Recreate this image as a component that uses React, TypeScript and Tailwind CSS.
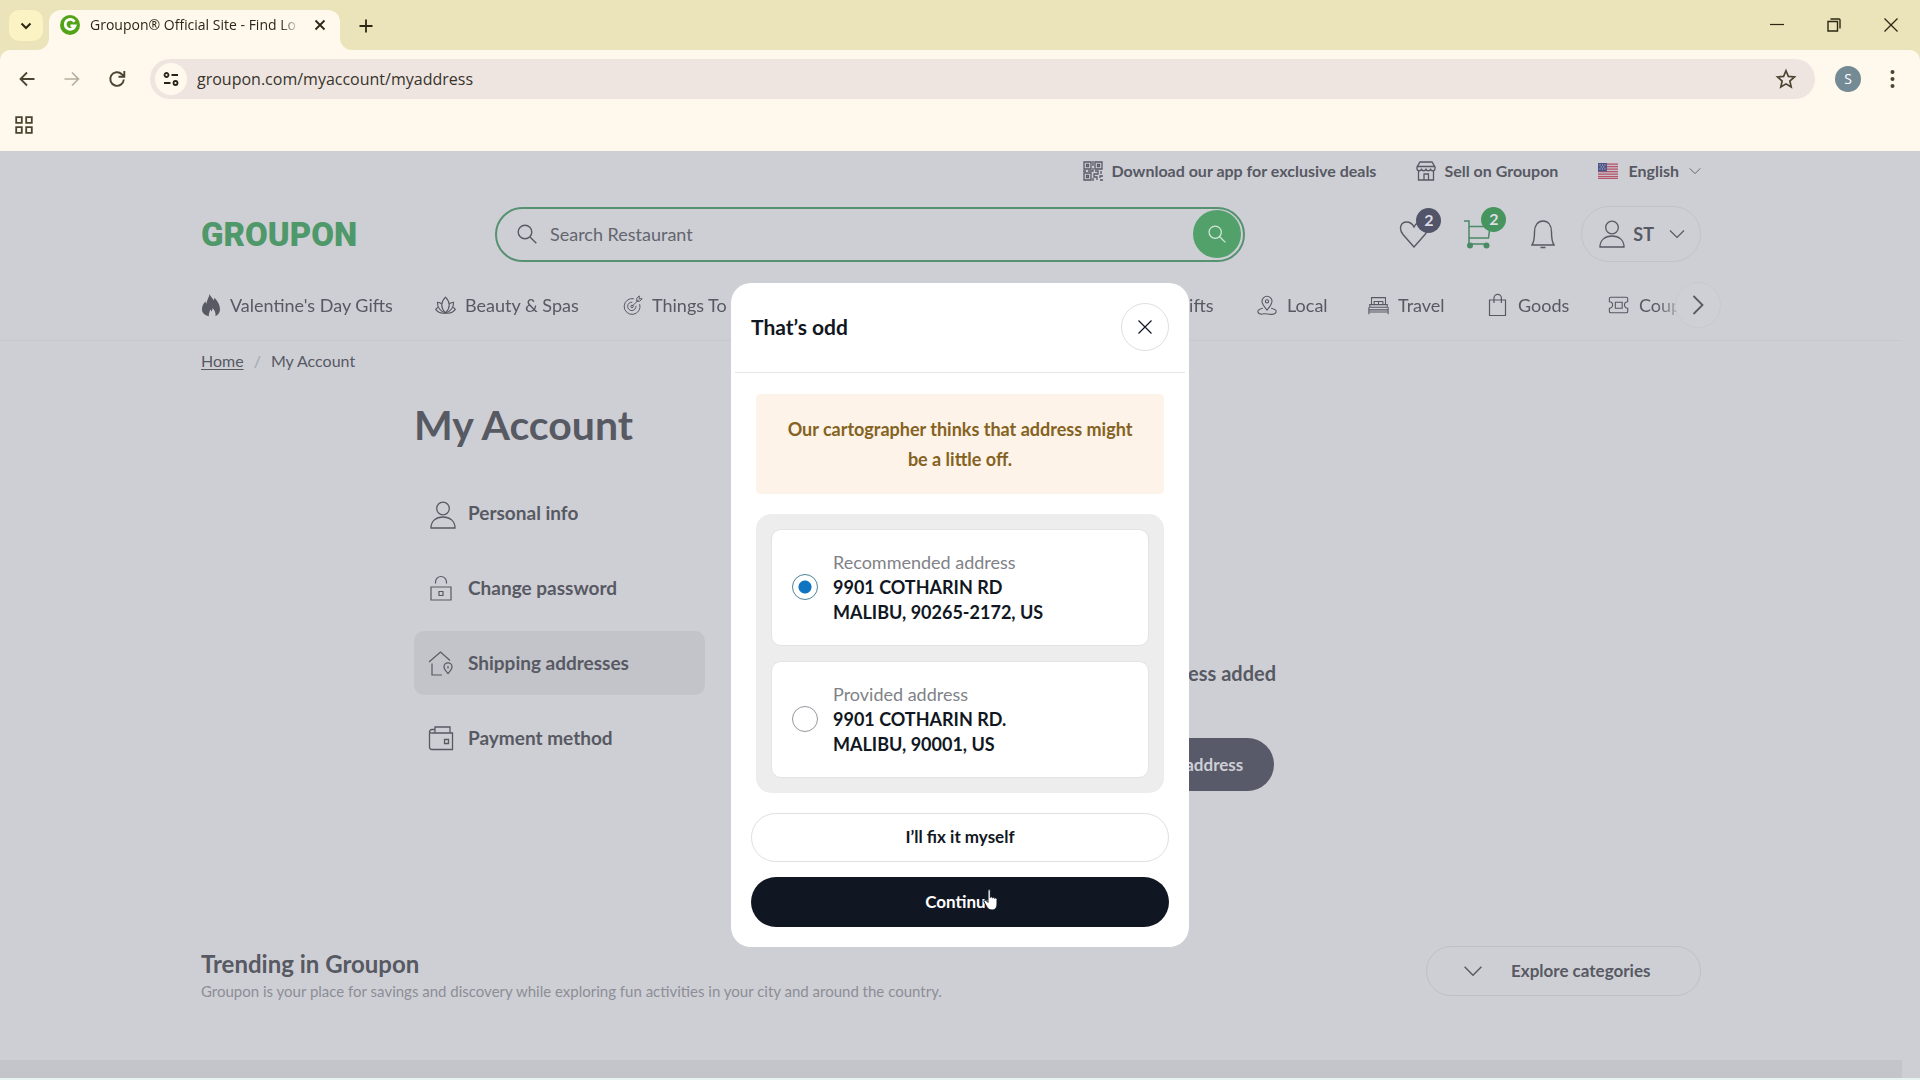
import type { ReactNode } from "react";

type IconProps = { children: ReactNode; box?: string; className?: string; width?: number };

function Icon({ children, box = "0 0 24 24", className = "size-6", width = 1.2 }: IconProps) {
  return (
    <svg
      viewBox={box}
      className={`shrink-0 ${className}`}
      fill="none"
      stroke="currentColor"
      strokeWidth={width}
      aria-hidden="true"
    >
      {children}
    </svg>
  );
}

const ChevronDown = ({ className }: { className: string }) => (
  <Icon box="0 0 16 10" className={className}>
    <path d="M1 1.5l7 7 7-7" />
  </Icon>
);

const PersonIcon = ({ className }: { className: string }) => (
  <Icon box="0 0 26 28" className={className} width={1.3}>
    <circle cx="13" cy="7.5" r="6.3" />
    <path d="M1 27c0-7 5-11 12-11s12 4 12 11z" />
  </Icon>
);

const FlameIcon = () => (
  <svg viewBox="0 0 20 24" className="h-6 w-5 shrink-0" fill="currentColor" aria-hidden="true">
    <path d="M8.500 1c1 2.500 3 4 4.200 6.200.5-.8.7-1.600.7-2.400C16.500 8 19 11.800 19 16c0 3.500-1.800 6-4.500 7.200.5-3.200-.8-5.800-3-8.200.1 1.500-.3 2.500-1 3.400-.4-.8-.8-1.400-1.500-1.900.1 2.200-1.400 3.500-1.200 6.700C3.500 22.200 1 20 1 16c0-3.200 1.600-5.400 3.500-7.400.2 1 .5 1.700 1 2.200C5.600 7.200 8.200 4.500 8.500 1z" />
  </svg>
);

const SearchIcon = ({ className }: { className: string }) => (
  <Icon box="0 0 20 20" className={className} width={1.4}>
    <circle cx="8" cy="8" r="6.800" />
    <path d="M13 13l6.300 6.300" />
  </Icon>
);

const categories: { label: string; icon: ReactNode; width: string }[] = [
  { label: "Valentine's Day Gifts", icon: <FlameIcon />, width: "w-[234px]" },
  {
    label: "Beauty & Spas",
    width: "w-[188px]",
    icon: (
      <Icon className="size-[21px]" width={1.3}>
        <path d="M12 2.500c-3 3-4.300 6-4.300 9 0 3.500 1.800 6.500 4.300 9 2.500-2.500 4.300-5.500 4.300-9 0-3-1.300-6-4.300-9z" />
        <path d="M7.700 10.500C6.300 9 4.500 8.300 2.800 8.300c-.3 5.700 3.500 10.700 9.200 12.200M16.300 10.500c1.400-1.500 3.200-2.200 4.900-2.200.3 5.700-3.500 10.700-9.200 12.200" />
        <path d="M3.300 13.800L.8 16.500c2.200 3 6.700 5 11.200 4 4.500 1 9-1 11.200-4l-2.500-2.700" />
      </Icon>
    ),
  },
  {
    label: "Things To Do",
    width: "w-[170px]",
    icon: (
      <Icon className="size-5">
        <path d="M20 11a9.500 9.500 0 1 1-7-6.500M15.500 13a5 5 0 1 1-4.300-4.300M11 13.500l8-8M16.500 7.500V4l3-3v3.500H23l-3 3z" />
        <circle cx="10.800" cy="13.700" r="1.500" />
      </Icon>
    ),
  },
  {
    label: "Auto & Home",
    width: "w-[174px]",
    icon: (
      <Icon className="size-5">
        <path d="M2 11l10-8 10 8M5 9v12h14V9" />
      </Icon>
    ),
  },
  {
    label: "Food & Drink",
    width: "w-[180px]",
    icon: (
      <Icon className="size-5">
        <path d="M6 3v18M3 3v6h6V3M17 21V3c-3 2-4 6-3 10h3" />
      </Icon>
    ),
  },
  {
    label: "Gifts",
    width: "w-[109px]",
    icon: (
      <Icon className="size-5">
        <path d="M3 8h18v4H3zM5 12v9h14v-9M12 8v13" />
      </Icon>
    ),
  },
  {
    label: "Local",
    width: "w-[112px]",
    icon: (
      <Icon className="size-[22px]">
        <path d="M12 17.500c-3.500-4-5.500-6.500-5.500-9.500a5.500 5.500 0 0 1 11 0c0 3-2 5.500-5.500 9.500z" />
        <circle cx="12" cy="8" r="1.800" />
        <path d="M7.500 15.500c-4 .8-5.500 2-5.500 3.500 0 1.200 1.500 2.500 3.500 3 5-1.500 8 .8 12 .2 3-.5 4.500-1.800 4.500-3.200 0-1.500-2-2.800-5.500-3.500" />
      </Icon>
    ),
  },
  {
    label: "Travel",
    width: "w-[119px]",
    icon: (
      <Icon className="size-[21px]">
        <path d="M4 11V3h16v8M2 11h20v3H2zM1 17h22M1 14v8M23 14v8M1 19.500h22M7 11V7.500h10V11M12 7.500V11" />
      </Icon>
    ),
  },
  {
    label: "Goods",
    width: "w-[121px]",
    icon: (
      <Icon box="0 0 22 24" className="h-6 w-[22px]">
        <path d="M2.500 7h16v15.500h-16zM7 10V5a3.700 3.700 0 0 1 7.400 0v5" />
      </Icon>
    ),
  },
  {
    label: "Coupons",
    width: "w-[120px]",
    icon: (
      <Icon className="size-[22px]">
        <path d="M3 3.500h17a1.500 1.500 0 0 1 1.500 1.500v3.500a3.500 3.500 0 0 0 0 7V19a1.500 1.500 0 0 1-1.500 1.500H3A1.500 1.500 0 0 1 1.500 19v-3.500a3.500 3.500 0 0 0 0-7V5A1.500 1.500 0 0 1 3 3.500z" />
        <path d="M8 9h7.500v6.500H8z" />
      </Icon>
    ),
  },
];

const accountLinks: { label: string; icon: ReactNode; active?: boolean }[] = [
  { label: "Personal info", icon: <PersonIcon className="mt-1 ml-0.5 h-7 w-[26px]" /> },
  {
    label: "Change password",
    icon: (
      <Icon box="0 0 26 26" className="size-[26px]" width={1.2}>
        <path d="M3 12h20v13H3zM7.500 8.500V7a5.500 5.500 0 0 1 11 0v1.500M11 16.500h4v4h-4z" />
      </Icon>
    ),
  },
  {
    label: "Shipping addresses",
    active: true,
    icon: (
      <Icon box="0 0 26 26" className="size-[26px]" width={1.2}>
        <path d="M1 12L12.500 2 22 10.500M4 13.500V25h10M20 23.500c-3-3-4-5-4-6.700a4 4 0 0 1 8 0c0 1.700-1 3.700-4 6.700zM20 16v2.500" />
      </Icon>
    ),
  },
  {
    label: "Payment method",
    icon: (
      <Icon box="0 0 26 26" className="size-[26px]" width={1.3}>
        <path d="M7 8V2h15v6M7 4.500H4A2.500 2.500 0 0 0 1.500 7v15A2.500 2.500 0 0 0 4 24.500h20.500V8H4a2 2 0 0 1-2.500-1.500M16.500 14.500h4v4h-4z" />
      </Icon>
    ),
  },
];

const addresses = [
  { id: "recommended", title: "Recommended address", lines: ["9901 COTHARIN RD", "MALIBU, 90265-2172, US"] },
  { id: "provided", title: "Provided address", lines: ["9901 COTHARIN RD.", "MALIBU, 90001, US"] },
];

function Browser() {
  return (
    <header className="font-['Open_Sans',sans-serif] text-[#2b2714]">
      <div className="flex h-[50px] items-end bg-[#ebe3b9]">
        <div className="flex h-10 flex-1 items-start pl-[9px]">
          <button aria-label="Search tabs" className="flex h-[31px] w-[34px] items-center justify-center rounded-[10px] bg-[#fbf3c4]">
            <Icon box="0 0 16 16" className="size-4" width={2}>
              <path d="M3.500 5.500L8 10l4.500-4.500" />
            </Icon>
          </button>
          <div className="relative ml-1.5 flex h-10 w-[291px] items-start rounded-t-[12px] bg-[#fef9ec] pt-[5px] pl-[11px]">
            <svg viewBox="0 0 12 12" className="absolute bottom-0 -left-3 size-3" fill="#fef9ec" aria-hidden="true">
              <path d="M12 0v12H0A12 12 0 0 0 12 0z" />
            </svg>
            <svg viewBox="0 0 12 12" className="absolute -right-3 bottom-0 size-3" fill="#fef9ec" aria-hidden="true">
              <path d="M0 0v12h12A12 12 0 0 1 0 0z" />
            </svg>
            <svg viewBox="0 0 20 20" className="size-5" aria-hidden="true">
              <circle cx="10" cy="10" r="10" fill="#53a318" />
              <path d="M14.500 6.800A5 5 0 1 0 15 10.800H10.500" fill="none" stroke="#fff" strokeWidth="2.800" />
            </svg>
            <span className="ml-[10px] w-[212px] overflow-hidden text-sm leading-5 whitespace-nowrap [mask-image:linear-gradient(to_right,#000_90%,transparent_99%)]">
              Groupon® Official Site - Find Lo
            </span>
            <button aria-label="Close tab" className="ml-2 flex size-5 items-center justify-center">
              <Icon box="0 0 12 12" className="size-3" width={1.8}>
                <path d="M1.500 1.500l9 9M10.500 1.500l-9 9" />
              </Icon>
            </button>
          </div>
          <button aria-label="New tab" className="ml-[18px] flex h-[31px] w-4 items-center justify-center">
            <Icon box="0 0 14 14" className="size-3.5" width={1.8}>
              <path d="M7 .5v13M.5 7h13" />
            </Icon>
          </button>
        </div>
        <div className="flex h-[50px] items-center gap-[43px] pr-[22px]">
          <button aria-label="Minimize">
            <Icon box="0 0 14 14" className="size-3.5">
              <path d="M0 6.500h14" />
            </Icon>
          </button>
          <button aria-label="Restore">
            <Icon box="0 0 14 14" className="size-3.5" width={1.4}>
              <path d="M1 3.500h9.500V13H1zM3.500 1H12a1 1 0 0 1 1 1v8.500" />
            </Icon>
          </button>
          <button aria-label="Close window">
            <Icon box="0 0 14 14" className="size-3.5" width={1.3}>
              <path d="M.5.5l13 13M13.500.5l-13 13" />
            </Icon>
          </button>
        </div>
      </div>

      <div className="bg-[#ebe3b9]">
        <div className="flex h-[58px] items-center rounded-t-[10px] bg-[#fef9ec] pr-[25px] pl-[19px] text-[#4a4530]">
          <button aria-label="Back">
            <Icon box="0 0 16 16" className="size-4" width={1.8}>
              <path d="M15.500 8H1.500M8 1.500L1.500 8 8 14.500" />
            </Icon>
          </button>
          <button aria-label="Forward" className="ml-[29px] text-[#b3ae9c]">
            <Icon box="0 0 16 16" className="size-4" width={1.6}>
              <path d="M.5 8h14M8 1.500L14.500 8 8 14.500" />
            </Icon>
          </button>
          <button aria-label="Reload" className="ml-7">
            <Icon box="0 0 18 18" className="size-[18px]" width={1.9}>
              <path d="M15.800 9.500A6.800 6.800 0 1 1 13.800 4.200L16 6.500M16.300 1v5.800h-5.800" />
            </Icon>
          </button>
          <div className="ml-6 flex h-10 flex-1 items-center rounded-full bg-[#eee5e1] pr-[18px] pl-[5px]">
            <button aria-label="Site information" className="flex size-8 items-center justify-center rounded-full bg-[#fef9ec] text-[#26231a]">
              <Icon box="0 0 16 16" className="size-4" width={1.8}>
                <circle cx="3.500" cy="4" r="2" />
                <path d="M8.500 4H15M1 12h6.500" />
                <circle cx="12.500" cy="12" r="2" />
              </Icon>
            </button>
            <input
              aria-label="Address bar"
              defaultValue="groupon.com/myaccount/myaddress"
              className="ml-2.5 flex-1 bg-transparent text-base text-[#37342b] outline-none"
            />
            <button aria-label="Bookmark">
              <Icon className="size-[22px]" width={1.8}>
                <path d="M12 3l2.600 6.200 6.700.6-5.100 4.400 1.500 6.600L12 17.300l-5.700 3.500 1.500-6.600-5.100-4.400 6.700-.6z" />
              </Icon>
            </button>
          </div>
          <button className="ml-5 size-[26px] rounded-full bg-[#748a94] text-sm text-white">S</button>
          <button aria-label="Menu" className="ml-[29px]">
            <svg viewBox="0 0 5 20" className="h-5 w-[5px]" fill="currentColor" aria-hidden="true">
              <circle cx="2.500" cy="3" r="2" />
              <circle cx="2.500" cy="10" r="2" />
              <circle cx="2.500" cy="17" r="2" />
            </svg>
          </button>
        </div>
      </div>

      <div className="flex h-[43px] items-start bg-[#fef9ec] pt-2 pl-[15px] text-[#4a4530]">
        <button aria-label="Apps">
          <Icon box="0 0 18 18" className="size-[18px]" width={1.8}>
            <path d="M1.200 1.200h5.600v5.600H1.200zM11.200 1.200h5.600v5.600h-5.600zM1.200 11.200h5.600v5.600H1.200zM11.200 11.200h5.600v5.600h-5.600z" />
          </Icon>
        </button>
      </div>
    </header>
  );
}

function FlagUS() {
  return (
    <svg viewBox="0 0 20 16" className="h-4 w-5" aria-hidden="true">
      <rect width="20" height="16" fill="#c9bfc9" />
      <path d="M0 1.200h20M0 3.700h20M0 6.200h20M0 8.700h20M0 11.200h20M0 13.700h20M0 15.700h20" stroke="#b5566b" strokeWidth="1.200" />
      <rect width="9" height="8.500" fill="#4d5687" />
      <path d="M1.500 2h1M4 2h1M6.500 2h1M2.700 4h1M5.200 4h1M1.500 6h1M4 6h1M6.500 6h1" stroke="#c9cad6" />
    </svg>
  );
}

function SiteHeader() {
  return (
    <div className="border-b border-[#c8c9ce]">
      <div className="mx-auto max-w-[1500px]">
        <div className="flex h-10 items-center justify-end gap-10 text-base font-bold">
          <a href="#app" className="flex items-center gap-2">
            <Icon box="0 0 20 20" className="size-5" width={1.3}>
              <path d="M1 1h7v7H1zM3.500 3.500h2v2h-2zM12 1h7v7h-7zM14.500 3.500h2v2h-2zM1 12h7v7H1zM3.500 14.500h2v2h-2zM10 0v5M10 7v3H5M0 10h3M12 10h3v3h-4v3h3v3M18 10v3M20 15h-3v2M17 19h3M10 17v3" />
            </Icon>
            Download our app for exclusive deals
          </a>
          <a href="#sell" className="flex items-center gap-2">
            <Icon box="0 0 20 20" className="size-5" width={1.3}>
              <path d="M4 1h12l3 5v1.500a2.200 2.200 0 0 1-4.500 0 2.200 2.200 0 0 1-4.500 0 2.200 2.200 0 0 1-4.500 0 2.200 2.200 0 0 1-4.500 0V6zM1.500 5.500h17M2.500 10v9h15v-9M8 19v-6h4.500v6" />
            </Icon>
            Sell on Groupon
          </a>
          <button className="flex items-center gap-2.5">
            <FlagUS />
            English
            <ChevronDown className="h-2 w-3" />
          </button>
        </div>

        <div className="flex h-[86px] items-center">
          <a href="#home" className="w-[294px] font-['Roboto',sans-serif] text-[33px] leading-none font-black text-[#4f9869]">
            GROUPON
          </a>
          <form className="flex h-[55px] w-[750px] items-center rounded-full border-2 border-[#569270] pr-0.5 pl-5">
            <SearchIcon className="size-5" />
            <input
              aria-label="Search"
              placeholder="Search Restaurant"
              className="ml-[13px] flex-1 bg-transparent text-lg outline-none placeholder:text-[#63656e]"
            />
            <button type="button" aria-label="Submit search" className="flex size-12 items-center justify-center rounded-full bg-[#52a06a] text-[#d3e6da]">
              <SearchIcon className="size-[18px]" />
            </button>
          </form>
          <div className="ml-auto flex items-center">
            <button aria-label="Wishlist, 2 items" className="relative">
              <Icon box="0 0 30 28" className="h-7 w-[30px]" width={1.4}>
                <path d="M15 27L4 14.500C-.5 9 1.500 2 7.500 2c3.500 0 6 2 7.500 5 1.500-3 4-5 7.500-5 6 0 8 7 3.500 12.500z" />
              </Icon>
              <span className="absolute -top-3 left-[17px] size-[25px] rounded-full bg-[#525469] text-center text-base leading-6 font-bold text-[#dcdce4]">2</span>
            </button>
            <button aria-label="Cart, 2 items" className="relative ml-[35px] text-[#4a8a65]">
              <Icon box="0 0 28 30" className="h-[30px] w-7" width={1.5}>
                <path d="M0 2h5v23h18M5 7.500h21L24.500 19H5" />
                <circle cx="6" cy="26.500" r="3" fill="currentColor" stroke="none" />
                <circle cx="22.500" cy="26.500" r="3" fill="currentColor" stroke="none" />
              </Icon>
              <span className="absolute -top-3 left-[17px] size-[25px] rounded-full bg-[#46945e] text-center text-base leading-6 font-bold text-[#dcdce4]">2</span>
            </button>
            <button aria-label="Notifications" className="ml-[39px]">
              <Icon box="0 0 24 30" className="h-[30px] w-6" width={1.4}>
                <path d="M1 26c2-3 2.500-6 2.500-13C3.500 6 7 2 12 2s8.500 4 8.500 11c0 7 .5 10 2.500 13zM9.500 28.500h5" />
              </Icon>
            </button>
            <button className="ml-[26px] flex h-14 items-center rounded-full border border-[#c2c3c9] pr-[15px] pl-[17px] text-lg font-bold">
              <PersonIcon className="h-7 w-[26px]" />
              <span className="mr-[15px] ml-2">ST</span>
              <ChevronDown className="h-2.5 w-4" />
            </button>
          </div>
        </div>

        <nav className="relative mb-[7px] flex h-14 items-center">
          <ul className="flex flex-1 overflow-hidden [mask-image:linear-gradient(to_right,#000_97%,transparent_99%)]">
            {categories.map((c) => (
              <li key={c.label} className={`shrink-0 ${c.width}`}>
                <a href="#category" className="flex items-center gap-[9px] text-lg whitespace-nowrap">
                  {c.icon}
                  {c.label}
                </a>
              </li>
            ))}
          </ul>
          <button
            aria-label="More categories"
            className="absolute -right-5 flex size-[46px] items-center justify-center rounded-full border border-[#c9cacf] bg-[#cfd0d6]"
          >
            <Icon box="0 0 12 20" className="h-5 w-3" width={1.8}>
              <path d="M1.500 1l9 9-9 9" />
            </Icon>
          </button>
        </nav>
      </div>
    </div>
  );
}

function AddressDialog() {
  return (
    <div className="absolute inset-0 flex items-center justify-center text-[#111722]">
      <div role="dialog" aria-labelledby="dialog-title" className="w-[458px] rounded-[20px] bg-white pb-5">
        <div className="mx-1 flex h-[90px] items-center justify-between border-b border-[#e4e5e8] px-4">
          <h2 id="dialog-title" className="text-[21px] font-bold">
            That’s odd
          </h2>
          <button aria-label="Close" className="flex size-12 items-center justify-center rounded-full border border-[#dedfe3]">
            <Icon box="0 0 14 14" className="size-3.5">
              <path d="M.5.5l13 13M13.500.5l-13 13" />
            </Icon>
          </button>
        </div>
        <div className="px-5 pt-[21px]">
          <p className="mx-[5px] rounded-[4px] bg-[#fef3e8] px-6 py-[20px] text-center text-lg leading-[30px] font-bold text-[#846222]">
            Our cartographer thinks that address might be a little off.
          </p>
          <fieldset className="mx-[5px] mt-5 flex flex-col gap-[15px] rounded-[15px] bg-[#ededed] p-[15px]">
            <legend className="sr-only">Choose an address</legend>
            {addresses.map((a, i) => (
              <label
                key={a.id}
                htmlFor={a.id}
                className="flex items-center rounded-[10px] border border-[#e2e3e5] bg-white py-5 pl-5 text-lg leading-[25px]"
              >
                <input
                  id={a.id}
                  type="radio"
                  name="address"
                  defaultChecked={i === 0}
                  className="size-[26px] appearance-none rounded-full border border-[#96989d] bg-white checked:border-[#4d8296] checked:bg-[radial-gradient(circle,#0f75c2_0,#0f75c2_6px,#fff_7px)]"
                />
                <span className="ml-[15px] font-bold">
                  <span className="block font-normal text-[#808287]">{a.title}</span>
                  {a.lines.map((line) => (
                    <span key={line} className="block">
                      {line}
                    </span>
                  ))}
                </span>
              </label>
            ))}
          </fieldset>
          <button className="mt-5 h-[49px] w-full rounded-full border border-[#dedfe3] text-[17px] font-bold">I’ll fix it myself</button>
          <button className="relative mt-[15px] h-[50px] w-full rounded-full bg-[#111722] text-[17px] font-bold text-white">
            Continue
            <svg viewBox="0 0 17 22" className="absolute top-3 left-[232px] h-[22px] w-[17px]" aria-hidden="true">
              <path
                d="M5 1.800c0-1.600 2.300-1.600 2.300 0v6.700c.4-1.100 2.200-.9 2.200.4.500-1 2.100-.7 2.200.5.600-.9 2.300-.5 2.300.9v4.700c0 3.300-1.500 6-5 6-3 0-4.200-1.300-5.500-3.800L1 12.900c-.7-1.500 1.200-2.400 2.200-1.300L5 13.500z"
                fill="#fff"
                stroke="#111722"
                strokeWidth="1"
              />
            </svg>
          </button>
        </div>
      </div>
    </div>
  );
}

export default function App() {
  return (
    <div className="flex min-h-screen flex-col bg-[#e9f4f2] pb-0.5">
      <Browser />
      <div className="relative flex flex-1 flex-col bg-[#cecfd5] font-['Lato',sans-serif] text-[#575963]">
        <div className="flex flex-1 flex-col pr-[18px]">
          <SiteHeader />
          <div className="mx-auto flex h-10 w-full max-w-[1500px] items-center text-base">
            <a href="#home" className="underline underline-offset-2">
              Home
            </a>
            <span className="mx-[10px] text-[#a3a4ac]">/</span>
            <span>My Account</span>
          </div>

          <main className="mx-auto flex w-full max-w-[1074px]">
            <div className="w-[291px]">
              <h1 className="mt-5 text-[41px] leading-[48px] font-bold">My Account</h1>
              <ul className="mt-8 flex flex-col gap-[11px]">
                {accountLinks.map((l) => (
                  <li key={l.label}>
                    <a
                      href="#account"
                      className={`flex h-16 items-center rounded-[10px] pl-[14px] text-[19px] font-bold ${l.active ? "bg-[#c3c4ca]" : ""}`}
                    >
                      <span className="w-10">{l.icon}</span>
                      {l.label}
                    </a>
                  </li>
                ))}
              </ul>
            </div>
            <div className="flex flex-1 flex-col items-center pt-[280px] pl-[120px] font-bold">
              <p className="text-xl leading-6">No shipping address added</p>
              <button className="mt-[53px] h-[53px] rounded-full bg-[#585a6a] px-[31px] text-[17px] text-[#cecfd5]">Add a shipping address</button>
            </div>
          </main>

          <section className="mx-auto mt-[155px] flex w-full max-w-[1500px] justify-between">
            <div>
              <h2 className="text-2xl leading-9 font-bold">Trending in Groupon</h2>
              <p className="text-[15px] leading-[18px] text-[#8c8d95]">
                Groupon is your place for savings and discovery while exploring fun activities in your city and around the country.
              </p>
            </div>
            <button className="flex h-[50px] w-[275px] items-center rounded-full border border-[#bfc0c6] pl-9 text-[17px] font-bold">
              <ChevronDown className="mr-7 h-3 w-5" />
              Explore categories
            </button>
          </section>
          <div className="mt-auto h-[18px] bg-[#c4c5ca]" />
        </div>
        <AddressDialog />
      </div>
    </div>
  );
}
